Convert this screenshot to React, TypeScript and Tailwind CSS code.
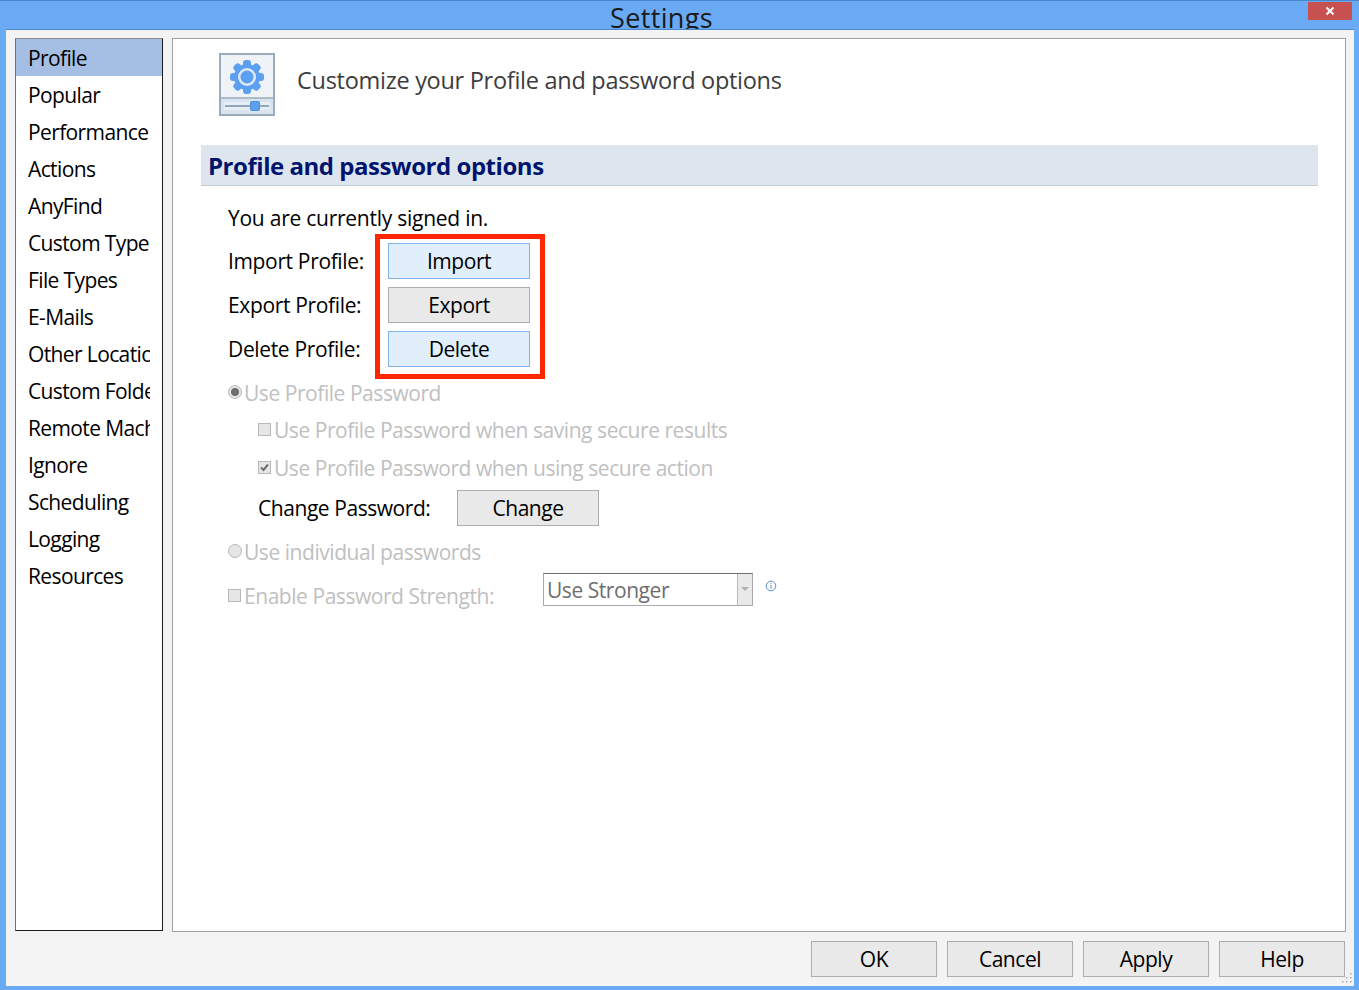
import React from "react";

const font = { fontFamily: '"Open Sans", "Noto Sans", sans-serif' };
const items = ["Profile","Popular","Performance","Actions","AnyFind","Custom Type","File Types","E-Mails","Other Locations","Custom Folders","Remote Machines","Ignore","Scheduling","Logging","Resources"];

function Btn({ label, blue, w = "w-[142px]", h = "h-[36px]" }: { label: string; blue?: boolean; w?: string; h?: string }) {
  return (
    <div className={`${w} ${h} pt-[2px] flex items-center justify-center border text-[21px] tracking-[-0.45px] text-black ${blue ? "bg-[#e1effc] border-[#7eb4ea]" : "bg-[#e9e9e9] border-[#adadad]"}`}>
      {label}
    </div>
  );
}

function Check({ checked }: { checked?: boolean }) {
  return (
    <div className="w-[13px] h-[13px] border border-[#b8b8b8] bg-[#e6e6e6] shrink-0 flex items-center justify-center">
      {checked && (
        <svg width="11" height="11" viewBox="0 0 11 11"><path d="M2 5.5 L4.5 8 L9 2.5" fill="none" stroke="#6d6d6d" strokeWidth="2" /></svg>
      )}
    </div>
  );
}

function Radio({ checked }: { checked?: boolean }) {
  return (
    <div className="w-[14px] h-[14px] rounded-full border border-[#b8b8b8] bg-[#e6e6e6] shrink-0 flex items-center justify-center">
      {checked && <div className="w-[8px] h-[8px] rounded-full bg-[#6d6d6d]" />}
    </div>
  );
}

function Gear() {
  const teeth = [0, 45, 90, 135, 180, 225, 270, 315];
  return (
    <svg width="56" height="63" viewBox="0 0 56 63">
      <rect x="1" y="1" width="54" height="61" fill="#eff3f8" stroke="#9aabbc" strokeWidth="2" />
      <rect x="2" y="45" width="52" height="16" fill="#d9e4ef" />
      <line x1="2" y1="45" x2="54" y2="45" stroke="#9aabbc" strokeWidth="1.5" />
      <rect x="5" y="49" width="46" height="8" fill="#e6edf5" />
      <line x1="6" y1="53" x2="50" y2="53" stroke="#94a7ba" strokeWidth="2" />
      <rect x="31.5" y="48.5" width="9" height="9" rx="1" fill="#5a9ff0" stroke="#4c8fdc" />
      {teeth.map((a) => (
        <rect key={a} x="24" y="7" width="8" height="8" rx="3" fill="#5a9ff0" transform={`rotate(${a} 28 24)`} />
      ))}
      <circle cx="28" cy="24" r="13" fill="#5a9ff0" />
      <circle cx="28" cy="24" r="9" fill="#dfe8f3" />
      <circle cx="28" cy="24" r="6.5" fill="#5a9ff0" />
    </svg>
  );
}

function Grip() {
  const dots = [[10, 2], [6, 6], [10, 6], [2, 10], [6, 10], [10, 10]];
  return (
    <svg className="absolute right-[2px] bottom-[3px]" width="12" height="12" viewBox="0 0 12 12">
      {dots.map(([x, y]) => (
        <rect key={`${x}-${y}`} x={x} y={y} width="1.5" height="1.5" fill="#a8a8a8" />
      ))}
    </svg>
  );
}

export default function App() {
  return (
    <div className="relative w-[1359px] h-[990px] overflow-hidden bg-[#6aaaf5] flex flex-col" style={font}>
      <div className="h-[29px] shrink-0 relative overflow-hidden border-t border-[#4a86cc] flex justify-center pr-[36px]">
        <span className="text-[27px] leading-[36px] text-[#1a1a1a] tracking-[0.35px] mt-[-1px]">Settings</span>
        <div className="absolute right-[7px] top-[1px] w-[44px] h-[18px] bg-[#c75050] flex items-center justify-center">
          <svg width="10" height="10" viewBox="0 0 10 10"><path d="M1.5 1.5 L8.5 8.5 M8.5 1.5 L1.5 8.5" stroke="#fff" strokeWidth="2" /></svg>
        </div>
      </div>
      <div className="flex-1 ml-[6px] mr-[5px] mb-[4px] bg-[#f3f3f3] border-t border-[#4a86cc] flex flex-col">
        <div className="flex gap-[9px] pl-[9px] pr-[8px] pt-[8px]">
          <div className="w-[148px] h-[893px] bg-white border border-[#1c1c1c] border-l-[#707070] border-t-[#8a8a8a] overflow-hidden">
            {items.map((t, i) => (
              <div key={t} className={`h-[37px] pl-[12px] pt-[2px] flex items-center text-[21px] tracking-[-0.62px] text-black ${i === 0 ? "bg-[#a5bfe4]" : ""}`}>
                <span className="w-[122px] overflow-hidden whitespace-nowrap block leading-[35px]">{t}</span>
              </div>
            ))}
          </div>
          <div className="w-[1174px] h-[894px] bg-white border border-[#a0a0a0] relative pl-[28px] pr-[27px]">
            <div className="flex items-start h-[106px] pt-[14px] pl-[18px]">
              <Gear />
              <div className="ml-[22px] mt-[7px] text-[23.5px] leading-[40px] tracking-[-0.28px] text-[#3c3c3c] whitespace-nowrap">Customize your Profile and password options</div>
            </div>
            <div className="h-[41px] bg-[#dde6ee] border-b border-[#c4ccd4] pl-[7px] pt-[1px] flex items-center text-[24px] font-bold text-[#00146e] tracking-[-0.46px]">Profile and password options</div>

            <div className="pl-[27px] text-[21px] tracking-[-0.35px] text-black">
              <div className="h-[32px] mt-[16px] pt-[2px] flex items-center tracking-[-0.25px]">You are currently signed in.</div>
              <div className="grid grid-cols-[160px_142px] gap-y-[8px] mt-[9px] items-center">
                <span className="pt-[2px]">Import Profile:</span><Btn label="Import" blue />
                <span className="pt-[2px]">Export Profile:</span><Btn label="Export" />
                <span className="pt-[2px]">Delete Profile:</span><Btn label="Delete" blue />
              </div>
              <div className="text-[#c0c0c0] tracking-[-0.45px]">
                <div className="flex items-center gap-[2px] h-[37px] mt-[6px]"><Radio checked /><span className="pt-[4px]">Use Profile Password</span></div>
                <div className="flex items-center gap-[3px] h-[38px] pl-[30px]"><Check /><span className="pt-[4px]">Use Profile Password when saving secure results</span></div>
                <div className="flex items-center gap-[3px] h-[38px] pl-[30px]"><Check checked /><span className="pt-[4px]">Use Profile Password when using secure action</span></div>
              </div>
              <div className="flex items-center h-[36px] pl-[30px] mt-[4px] tracking-[-0.44px]">
                <span className="w-[199px] pt-[2px]">Change Password:</span>
                <Btn label="Change" />
              </div>
              <div className="text-[#c0c0c0] tracking-[-0.45px]">
                <div className="flex items-center gap-[2px] h-[38px] mt-[6px]"><Radio /><span className="pt-[4px]">Use individual passwords</span></div>
                <div className="flex items-center h-[50px]">
                  <div className="flex items-center gap-[3px] w-[315px]"><Check /><span className="pt-[4px]">Enable Password Strength:</span></div>
                  <div className="w-[210px] h-[33px] mb-[12px] bg-white border border-[#a9a9a9] border-t-[#6e6e6e] flex items-center justify-between text-[#6e6e6e]">
                    <span className="pl-[3px] pt-[4px]">Use Stronger</span>
                    <div className="w-[15px] h-full bg-[#e9e9e9] border-l border-[#b8b8b8] flex items-center justify-center">
                      <div className="w-0 h-0 border-l-[4px] border-r-[4px] border-t-[4px] border-l-transparent border-r-transparent border-t-[#b0b0b0]" />
                    </div>
                  </div>
                  <svg className="ml-[12px] mb-[18px]" width="12" height="12" viewBox="0 0 12 12">
                    <circle cx="6" cy="6" r="4.8" fill="none" stroke="#5c8fd0" />
                    <path d="M6 5.2 V8.8 M6 3 V4.2" stroke="#5c8fd0" strokeWidth="1" />
                  </svg>
                </div>
              </div>
            </div>
            <div className="absolute left-[202px] top-[195px] w-[170px] h-[145px] border-[5px] border-[#ff2600]" />
          </div>
        </div>
        <div className="flex justify-end gap-[10px] pr-[9px] mt-[9px]">
          <Btn label="OK" w="w-[126px]" />
          <Btn label="Cancel" w="w-[126px]" />
          <Btn label="Apply" w="w-[126px]" />
          <Btn label="Help" w="w-[126px]" />
        </div>
        <div className="relative flex-1">
          <Grip />
        </div>
      </div>
    </div>
  );
}
